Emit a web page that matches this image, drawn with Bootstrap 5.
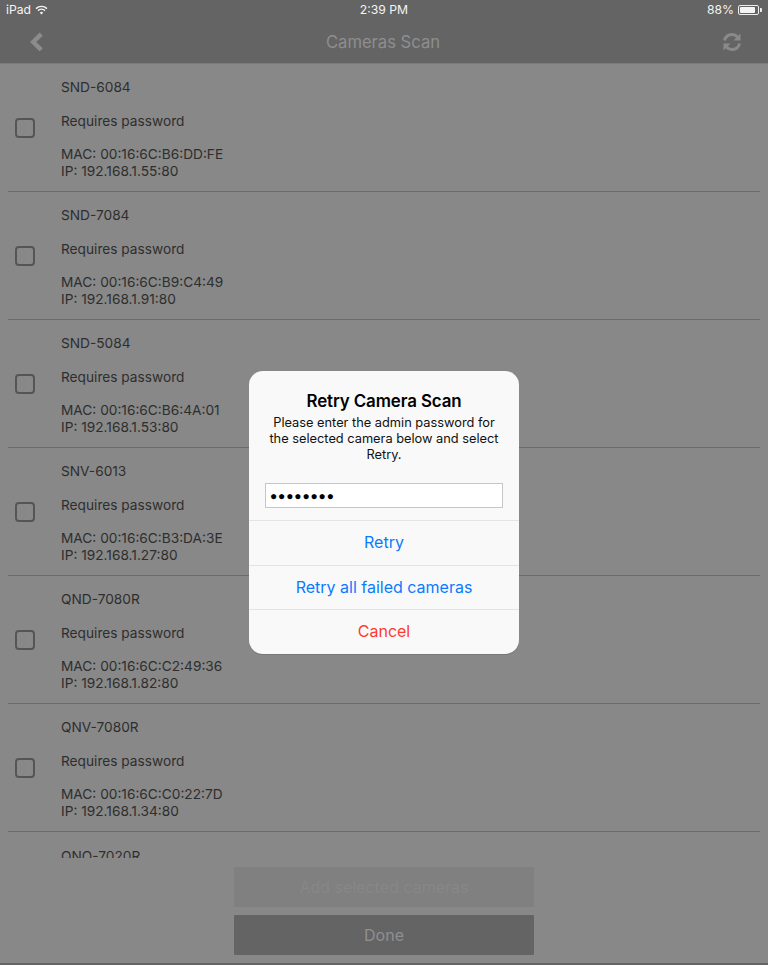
<!DOCTYPE html>
<html lang="en">
<head>
<meta charset="utf-8">
<title>Cameras Scan</title>
<link href="https://cdn.jsdelivr.net/npm/bootstrap@5.3.0/dist/css/bootstrap.min.css" rel="stylesheet">
<style>
html,body{height:965px;overflow:hidden;background:#888;}
body{font-family:Inter,Roboto,"Liberation Sans",sans-serif;color:#2e2e2e;}
.app-shell{width:768px;height:965px;}
.top-area{background:#646464;height:64px;border-bottom:1px solid #7a7a7a;flex:none;}
.status-row{height:20px;padding:0 6px;font-size:12.2px;color:#f4f4f4;}
.status-side{width:200px;}
.bat-shell{width:21px;height:10px;border:1px solid #eee;border-radius:2px;padding:1px;}
.bat-fill{width:88%;height:100%;background:#f4f4f4;border-radius:1px;}
.bat-tip{width:2px;height:4px;background:#eee;margin-left:1px;border-radius:0 1px 1px 0;}
.nav-row{height:44px;padding:0 26px 0 29px;}
.nav-title{font-size:16.6px;color:#8e8e8e;}
.scan-list{height:794px;overflow:hidden;flex:none;}
.scan-row{height:128px;margin:0 8px;border-bottom:1px solid #6c6c6c;padding-left:7px;}
.tick-box{width:20px;height:20px;border:2px solid #555;border-radius:4px;flex:none;margin-right:26px;}
.scan-text{font-size:13.7px;line-height:17px;color:#2e2e2e;padding-top:4px;}
.scan-text p{margin:0;}
.scan-text .gap-a{margin-bottom:17px;}
.scan-text .gap-b{margin-bottom:16px;}
.tail-row{height:60px;margin:0 8px;padding:16px 0 0 53px;}
.foot-area{flex:1;width:300px;margin:0 auto;padding-top:9px;}
.foot-btn{width:300px;height:40px;border:0;border-radius:1px;font-size:16px;padding:0;font-family:inherit;}
.add-btn{background:#808080;color:#878787;margin-bottom:8px;}
.done-btn{background:#646464;color:#8f8f8f;}
.bottom-rule{height:2px;background:#646464;flex:none;}
.dialog-layer{position:absolute;top:371px;left:249px;width:270px;height:283px;}
.dialog-box{width:270px;height:283px;background:#f9f9f9;border-radius:14px;overflow:hidden;box-shadow:0 1px 0 #777;}
.dialog-head{height:149px;padding-top:19px;}
.dialog-title{font-size:16.9px;font-weight:600;color:#000;line-height:22px;letter-spacing:-.1px;}
.dialog-msg{font-size:12.8px;line-height:16px;color:#111;margin:3px 0 0;}
.pass-field{width:238px;height:25px;border:1px solid #c6c6c6;background:#fff;margin:20px 0 0 16px;padding:0 0 0 4px;font-family:Roboto,sans-serif;font-size:12px;color:#000;letter-spacing:.85px;}
.dialog-act{height:44.5px;border:0;border-top:1px solid #e4e4e4;background:transparent;width:100%;font-family:inherit;font-size:16px;color:#0a7bff;padding:0 0 1px;}
.dialog-act.danger{color:#ff3b30;}
</style>
</head>
<body>
<div class="app-shell d-flex flex-column position-relative">
  <header class="top-area">
    <div class="status-row d-flex align-items-center justify-content-between">
      <div class="status-side d-flex align-items-center gap-1">
        <span>iPad</span>
        <svg width="13" height="10" viewBox="0 0 14 11" fill="none" stroke="#f4f4f4" stroke-width="1.6"><path d="M1 4a8.5 8.5 0 0 1 12 0"/><path d="M3.2 6.2a5.4 5.4 0 0 1 7.6 0"/><path d="M7 10.5 5.2 8.4a2.6 2.6 0 0 1 3.6 0z" fill="#f4f4f4" stroke="none"/></svg>
      </div>
      <span>2:39 PM</span>
      <div class="status-side d-flex align-items-center justify-content-end">
        <span class="me-1">88%</span>
        <div class="bat-shell"><div class="bat-fill"></div></div>
        <div class="bat-tip"></div>
      </div>
    </div>
    <div class="nav-row d-flex align-items-center justify-content-between">
      <svg width="15" height="20" viewBox="0 0 15 20"><path d="M12.2 2.2 4.2 10l8 7.8" fill="none" stroke="#8c8c8c" stroke-width="4.4"/></svg>
      <span class="nav-title">Cameras Scan</span>
      <svg width="20" height="20" viewBox="0 0 20 20" fill="none" stroke="#8a8a8a" stroke-width="3"><path d="M2.5 8.5A7.5 7.5 0 0 1 15.5 5"/><path d="M17.5 11.5A7.5 7.5 0 0 1 4.5 15"/><path d="M18.5 1.5v7h-7z" fill="#8a8a8a" stroke="none"/><path d="M1.5 18.5v-7h7z" fill="#8a8a8a" stroke="none"/></svg>
    </div>
  </header>
  <main class="scan-list">
    <div class="scan-row d-flex align-items-center"><span class="tick-box"></span><div class="scan-text"><p class="gap-a">SND-6084</p><p class="gap-b">Requires password</p><p>MAC: 00:16:6C:B6:DD:FE</p><p>IP: 192.168.1.55:80</p></div></div>
    <div class="scan-row d-flex align-items-center"><span class="tick-box"></span><div class="scan-text"><p class="gap-a">SND-7084</p><p class="gap-b">Requires password</p><p>MAC: 00:16:6C:B9:C4:49</p><p>IP: 192.168.1.91:80</p></div></div>
    <div class="scan-row d-flex align-items-center"><span class="tick-box"></span><div class="scan-text"><p class="gap-a">SND-5084</p><p class="gap-b">Requires password</p><p>MAC: 00:16:6C:B6:4A:01</p><p>IP: 192.168.1.53:80</p></div></div>
    <div class="scan-row d-flex align-items-center"><span class="tick-box"></span><div class="scan-text"><p class="gap-a">SNV-6013</p><p class="gap-b">Requires password</p><p>MAC: 00:16:6C:B3:DA:3E</p><p>IP: 192.168.1.27:80</p></div></div>
    <div class="scan-row d-flex align-items-center"><span class="tick-box"></span><div class="scan-text"><p class="gap-a">QND-7080R</p><p class="gap-b">Requires password</p><p>MAC: 00:16:6C:C2:49:36</p><p>IP: 192.168.1.82:80</p></div></div>
    <div class="scan-row d-flex align-items-center"><span class="tick-box"></span><div class="scan-text"><p class="gap-a">QNV-7080R</p><p class="gap-b">Requires password</p><p>MAC: 00:16:6C:C0:22:7D</p><p>IP: 192.168.1.34:80</p></div></div>
    <div class="tail-row scan-text">QNO-7020R</div>
  </main>
  <div class="foot-area">
    <button type="button" class="foot-btn add-btn d-block">Add selected cameras</button>
    <button type="button" class="foot-btn done-btn d-block">Done</button>
  </div>
  <div class="bottom-rule"></div>
  <div class="dialog-layer">
    <div class="dialog-box d-flex flex-column">
      <div class="dialog-head text-center">
        <div class="dialog-title">Retry Camera Scan</div>
        <p class="dialog-msg">Please enter the admin password for<br>the selected camera below and select<br>Retry.</p>
        <div class="pass-field text-start d-flex align-items-center">●●●●●●●●</div>
      </div>
      <button type="button" class="dialog-act">Retry</button>
      <button type="button" class="dialog-act">Retry all failed cameras</button>
      <button type="button" class="dialog-act danger">Cancel</button>
    </div>
  </div>
</div>
<script src="https://cdn.jsdelivr.net/npm/bootstrap@5.3.0/dist/js/bootstrap.bundle.min.js"></script>
</body>
</html>
